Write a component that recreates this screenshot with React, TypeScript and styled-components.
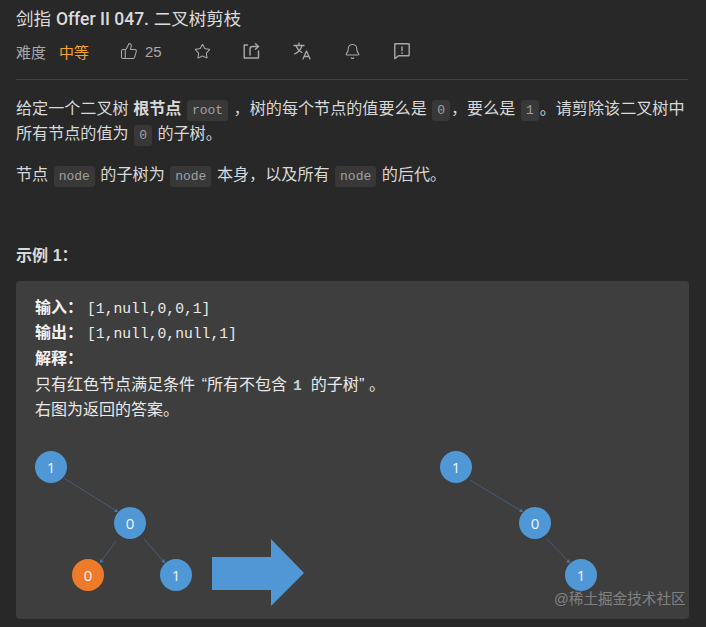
import React from "react";
import styled, { createGlobalStyle } from "styled-components";
import { ThumbsUp, Star, Bell } from "lucide-react";

const CJK = `"Liberation Sans", "Noto Sans CJK SC", sans-serif`;
const MONO = `"Liberation Mono", "Noto Sans CJK SC", monospace`;

const Global = createGlobalStyle`
  html, body { margin: 0; padding: 0; background: #282828; }
  * { box-sizing: border-box; }
`;

const Page = styled.div`
  position: relative;
  width: 706px;
  height: 627px;
  overflow: hidden;
  padding: 7px 18px 0 16px;
  background: #282828;
  color: #d9d9d9;
  font-family: ${CJK};
  font-size: 16.1px;
`;

const Title = styled.h1`
  margin: 0;
  height: 24px;
  font-size: 17.5px;
  line-height: 24px;
  font-weight: 400;
  color: #dcdcdc;
  white-space: nowrap;
`;

const TitleLatin = styled.span`
  font-family: "Roboto", "Liberation Sans", sans-serif;
  font-weight: 500;
`;

const Meta = styled.div`
  display: flex;
  align-items: center;
  height: 24px;
  margin-top: 8px;
  font-size: 15px;
  color: #a8a8a8;
`;

const Level = styled.span`
  margin-left: 13px;
  color: #f5a32f;
`;

const IconSlot = styled.span<{ $ml: number }>`
  display: inline-flex;
  align-items: center;
  justify-content: center;
  width: 18px;
  margin-left: ${(p) => p.$ml}px;
  color: #a8a8a8;
`;

const Count = styled.span`
  margin-left: 7px;
  font-size: 15px;
  width: 16px;
`;

const Divider = styled.hr`
  margin: 16px 0 0;
  border: 0;
  height: 1px;
  background: #444;
`;

const Para = styled.p`
  margin: 0 0 15.5px;
  line-height: 24.5px;
  white-space: nowrap;
`;

const Description = styled.div`
  margin-top: 16px;
`;

const Code = styled.code`
  display: inline-block;
  height: 21px;
  line-height: 21px;
  padding: 0 5px;
  margin: 0 1px;
  border-radius: 3px;
  background: #383838;
  color: #a0a0a0;
  font-family: ${MONO};
  font-size: 13px;
  vertical-align: 0;
`;

const ExampleHead = styled.div`
  margin-top: 56px;
  font-weight: 700;
  line-height: 24px;
  color: #d9d9d9;
`;

const Panel = styled.div`
  margin-top: 14px;
  height: 338px;
  width: 673px;
  padding: 14px 19px 0;
  border-radius: 4px;
  background: #3e3e3e;
  color: #eaeaea;
`;

const Line = styled.div`
  height: 25.7px;
  line-height: 25.7px;
  white-space: nowrap;
  font-size: 16px;
`;

const Mono = styled.span`
  font-family: ${MONO};
  font-size: 14.7px;
  font-weight: 400;
  margin-left: 4px;
`;

const Strong = styled.strong`
  font-weight: 700;
  color: #f2f2f2;
`;

const Quote = styled.span<{ $side: "open" | "close" }>`
  display: inline-block;
  width: ${(p) => (p.$side === "open" ? 12 : 10)}px;
  text-align: ${(p) => (p.$side === "open" ? "right" : "left")};
`;

const InlineNum = styled.span`
  font-family: ${MONO};
  font-size: 14.7px;
  font-weight: 700;
  margin: 0 9px 0 6px;
  color: #c9d2d2;
`;

const Diagram = styled.svg`
  display: block;
  margin-top: 18px;
`;

const Watermark = styled.div`
  position: absolute;
  left: 554px;
  top: 590px;
  font-size: 14.6px;
  line-height: 18px;
  color: rgba(255, 255, 255, 0.36);
  white-space: nowrap;
`;

const NodeText = styled.text`
  font-family: "Open Sans", "Liberation Sans", sans-serif;
  font-size: 15px;
  fill: #eef5fb;
  text-anchor: middle;
  dominant-baseline: central;
`;

const Node = ({ x, y, label, color = "#5097d5" }: { x: number; y: number; label: string; color?: string }) => (
  <g>
    <circle cx={x} cy={y} r={16} fill={color} />
    <NodeText x={x} y={y}>{label}</NodeText>
  </g>
);

const Edge = ({ x1, y1, x2, y2 }: { x1: number; y1: number; x2: number; y2: number }) => {
  const a = Math.atan2(y2 - y1, x2 - x1);
  const s = 4;
  const p = (t: number) => `${x2 - s * Math.cos(a + t)},${y2 - s * Math.sin(a + t)}`;
  return (
    <g>
      <line x1={x1} y1={y1} x2={x2} y2={y2} stroke="#4a5c74" strokeWidth={1} />
      <polygon points={`${x2},${y2} ${p(0.55)} ${p(-0.55)}`} fill="#4a72ad" />
    </g>
  );
};

const ShareIcon = () => (
  <svg width="18" height="18" viewBox="0 0 18 18" fill="none" stroke="currentColor" strokeWidth="1.4" strokeLinecap="round" strokeLinejoin="round">
    <path d="M5.5 3H2.2V16H16.5V9" />
    <path d="M13.5 1.8L16.5 4.5L13.5 7.2" />
    <path d="M16 4.5H10.5C9 4.5 8 5.5 8 7V13" />
  </svg>
);

const TranslateIcon = () => (
  <svg width="18" height="18" viewBox="0 0 18 18" fill="none" stroke="currentColor" strokeWidth="1.3" strokeLinecap="round" strokeLinejoin="round">
    <path d="M1 3.5h10M6 1v2.5" />
    <path d="M9 3.5C8 7 5 10.5 1.5 12" />
    <path d="M3 3.5C4 6.5 6 9 9 10.5" />
    <path d="M10 17l3.5-8 3.5 8M11.2 14.5h4.6" />
  </svg>
);

const ReportIcon = () => (
  <svg width="18" height="18" viewBox="0 0 18 18" fill="none" stroke="currentColor" strokeWidth="1.4" strokeLinejoin="round" strokeLinecap="round">
    <path d="M2.5 1.8h13c.4 0 .7.3.7.7v10.6c0 .4-.3.7-.7.7H5.5L1.8 16.6V2.5c0-.4.3-.7.7-.7z" />
    <path d="M9 5v3.6M9 10.8v.4" />
  </svg>
);

export default function App() {
  return (
    <Page>
      <Global />
      <Title>剑指 <TitleLatin>Offer II 047.</TitleLatin> 二叉树剪枝</Title>
      <Meta>
        难度
        <Level>中等</Level>
        <IconSlot $ml={31}><ThumbsUp size={18} strokeWidth={1.4} /></IconSlot>
        <Count>25</Count>
        <IconSlot $ml={32}><Star size={17} strokeWidth={1.5} /></IconSlot>
        <IconSlot $ml={31}><ShareIcon /></IconSlot>
        <IconSlot $ml={33}><TranslateIcon /></IconSlot>
        <IconSlot $ml={32}><Bell size={17} strokeWidth={1.5} /></IconSlot>
        <IconSlot $ml={32}><ReportIcon /></IconSlot>
      </Meta>
      <Divider />
      <Description>
        <Para>
          给定一个二叉树 <strong>根节点</strong> <Code>root</Code> ，树的每个节点的值要么是 <Code>0</Code>，要么是 <Code>1</Code>。请剪除该二叉树中
          <br />
          所有节点的值为 <Code>0</Code> 的子树。
        </Para>
        <Para>
          节点 <Code>node</Code> 的子树为 <Code>node</Code> 本身，以及所有 <Code>node</Code> 的后代。
        </Para>
      </Description>
      <ExampleHead>示例 1：</ExampleHead>
      <Panel>
        <Line><Strong>输入：</Strong><Mono>[1,null,0,0,1]</Mono></Line>
        <Line><Strong>输出：</Strong><Mono>[1,null,0,null,1]</Mono></Line>
        <Line><Strong>解释：</Strong></Line>
        <Line>只有红色节点满足条件<Quote $side="open">“</Quote>所有不包含<InlineNum>1</InlineNum>的子树<Quote $side="close">”</Quote>。</Line>
        <Line>右图为返回的答案。</Line>
        <Diagram width="640" height="175" viewBox="35 440 640 175">
          <Edge x1={64} y1={477} x2={118} y2={511} />
          <Edge x1={116} y1={540} x2={100} y2={562} />
          <Edge x1={144} y1={538} x2={165} y2={562} />
          <Node x={51} y={466} label="1" />
          <Node x={130} y={522} label="0" />
          <Node x={88} y={574} label="0" color="#ef7a2a" />
          <Node x={176} y={574} label="1" />
          <polygon points="212,556 271,556 271,538 304,572 271,605 271,589 212,589" fill="#5097d5" />
          <Edge x1={470} y1={479} x2={523} y2={511} />
          <Edge x1={547} y1={538} x2={570} y2={562} />
          <Node x={456} y={466} label="1" />
          <Node x={535} y={522} label="0" />
          <Node x={581} y={574} label="1" />
        </Diagram>
      </Panel>
      <Watermark>@稀土掘金技术社区</Watermark>
    </Page>
  );
}
